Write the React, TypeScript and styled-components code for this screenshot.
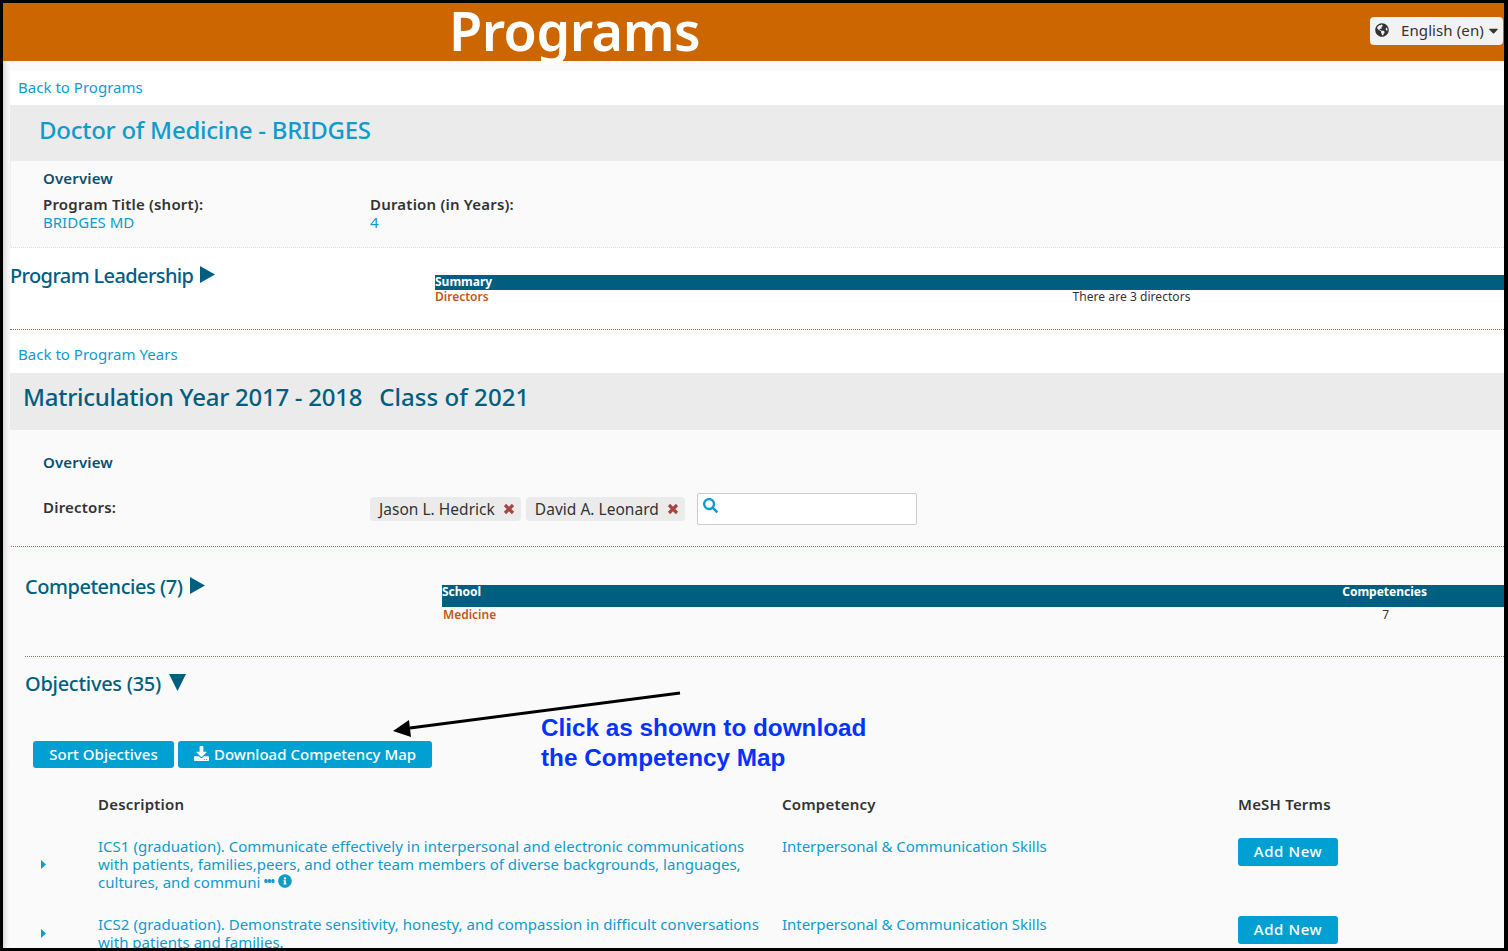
import React from "react";
import styled, { createGlobalStyle } from "styled-components";
import { FaGlobeAmericas, FaSearch, FaDownload, FaInfoCircle, FaCaretDown } from "react-icons/fa";

const Global = createGlobalStyle`
  html, body { margin: 0; padding: 0; background: #000; }
  * { box-sizing: border-box; }
  body { font-family: "Noto Sans", "Open Sans", sans-serif; }
`;

const teal = "#005f80";
const link = "#0f9bcc";
const orange = "#cc6600";

const Frame = styled.div`
  position: relative;
  width: 1508px;
  height: 951px;
  border: 3px solid #000;
  border-right-width: 4px;
  overflow: hidden;
  background: #fff;
  font-size: 15px;
  letter-spacing: 0.02px;
  color: #333;
`;
const Header = styled.header`
  height: 58px;
  background: ${orange};
  display: flex;
  align-items: flex-start;
  justify-content: space-between;
  padding: 0 1px 0 446px;
`;
const PageTitle = styled.h1`
  margin: 0;
  font-size: 54px;
  line-height: 54px;
  font-weight: 600;
  color: #fff;
  letter-spacing: -0.5px;
`;
const LangButton = styled.div`
  margin-top: 14px;
  width: 133px;
  height: 28px;
  background: #f2f2f2;
  border-radius: 4px;
  display: flex;
  align-items: center;
  padding: 0 2px 2px 5px;
  color: #333;
  font-size: 15px;
  letter-spacing: 0.1px;
  svg { flex-shrink: 0; }
`;
const LangText = styled.span`
  margin: 0 2px 0 12px;
  white-space: nowrap;
`;
const Main = styled.div`
  padding-left: 7px;
  background: linear-gradient(to right, #d8d8d8 0, #efefef 3px, #fafafa 7px);
`;
const Strip = styled.div`
  height: 10px;
  background: #fafafa;
`;
const BackRow = styled.div<{ $h: number; $top: number }>`
  height: ${(p) => p.$h}px;
  background: #fff;
  padding: ${(p) => p.$top}px 0 0 8px;
  line-height: 20px;
`;
const A = styled.span`
  color: ${link};
`;
const CompetencyLink = styled(A)`
  letter-spacing: -0.04px;
`;
const TitleBar = styled.div<{ $h: number; $x: number; $c: string; $pb: number }>`
  height: ${(p) => p.$h}px;
  background: #ebebeb;
  padding-left: ${(p) => p.$x}px;
  padding-bottom: ${(p) => p.$pb}px;
  color: ${(p) => p.$c};
  font-size: 24px;
  font-weight: 500;
  letter-spacing: -0.26px;
  display: flex;
  align-items: center;
  gap: 17px;
`;
const ClassLabel = styled.span`
  letter-spacing: 0.05px;
`;
const Overview = styled.section`
  height: 87px;
  background: #fafafa;
  border-left: 1px dotted #e6e6e6;
  border-bottom: 1px dotted #ddd;
  padding: 7px 0 0 32px;
`;
const SubHead = styled.div`
  color: #0d4f6b;
  font-weight: 600;
  font-size: 15px;
  line-height: 20px;
  letter-spacing: 0.15px;
`;
const Fields = styled.div`
  display: flex;
  margin-top: 7px;
  line-height: 18px;
`;
const Field = styled.div`
  width: 327px;
`;
const Label = styled.div`
  font-weight: 600;
  color: #333;
  letter-spacing: 0.2px;
`;
const Leadership = styled.section`
  height: 82px;
  background: #fff;
  border-bottom: 1px dotted #a8632a;
  display: flex;
  padding-top: 14px;
`;
const SectionTitle = styled.div<{ $ls: number }>`
  color: ${teal};
  font-size: 20px;
  font-weight: 500;
  line-height: 26px;
  letter-spacing: ${(p) => p.$ls}px;
  display: flex;
  align-items: flex-start;
  gap: 7px;
  margin-top: 1px;
  svg { margin-top: 3px; }
`;
const LeadTitle = styled(SectionTitle)`
  width: 425px;
`;
const MiniTable = styled.div`
  flex: 1;
  font-size: 12px;
  line-height: 14px;
  letter-spacing: 0;
`;
const SummaryHead = styled.div`
  margin-top: 13px;
  height: 15px;
  background: ${teal};
  color: #fff;
  font-weight: 700;
`;
const SummaryRow = styled.div`
  display: flex;
  color: #333;
`;
const Orange = styled.span`
  color: #c4561c;
  font-weight: 600;
`;
const RowNote = styled.span`
  margin-left: 584px;
  letter-spacing: 0.05px;
`;
const YearBody = styled.section`
  background: #fafafa;
`;
const YearOverview = styled.div`
  height: 117px;
  border-bottom: 1px dotted ${orange};
  margin-left: 1px;
  padding: 22px 0 0 32px;
`;
const DirRow = styled.div`
  display: flex;
  align-items: flex-start;
  margin-top: 20px;
`;
const DirLabel = styled(Label)`
  width: 327px;
  line-height: 32px;
  margin-top: -1px;
`;
const Chip = styled.span`
  height: 24px;
  margin: 5px 5px 0 0;
  background: #ebebeb;
  border-radius: 4px;
  padding: 0 6px 0 9px;
  display: inline-flex;
  align-items: center;
  gap: 8px;
  font-size: 15.5px;
`;
const SearchBox = styled.div`
  width: 220px;
  height: 32px;
  margin: 1px 0 0 7px;
  background: #fff;
  border: 1px solid #ccc;
  border-radius: 2px;
  padding: 4px 0 0 5px;
  color: ${link};
  line-height: 0;
`;
const CompSection = styled.div`
  height: 110px;
  margin-left: 15px;
  border-bottom: 1px dotted ${orange};
  display: flex;
  padding-top: 25px;
`;
const CompTitle = styled(SectionTitle)`
  width: 417px;
  gap: 8px;
  margin-top: 2px;
`;
const CompHead = styled.div`
  margin-top: 13px;
  height: 22px;
  background: ${teal};
  color: #fff;
  font-weight: 700;
  display: flex;
  justify-content: space-between;
  padding-right: 77px;
`;
const CompRow = styled.div`
  display: flex;
  justify-content: space-between;
  padding: 1px 115px 0 1px;
`;
const Objectives = styled.div`
  padding: 13px 0 0 15px;
`;
const ObjTitle = styled(SectionTitle)`
  gap: 8px;
`;
const Buttons = styled.div`
  display: flex;
  gap: 4px;
  margin: 44px 0 0 8px;
`;
const Btn = styled.div<{ $w: number }>`
  width: ${(p) => p.$w}px;
  height: 27px;
  background: #00a0d2;
  color: #fff;
  border-radius: 3px;
  display: flex;
  align-items: center;
  justify-content: center;
  gap: 5px;
  font-size: 15px;
  font-weight: 500;
  padding-bottom: 2px;
`;
const ObjGrid = styled.div`
  display: grid;
  grid-template-columns: 73px 684px 456px 1fr;
  line-height: 18px;
`;
const HeadCell = styled(Label)`
  padding-top: 27px;
  height: 69px;
`;
const RowArrow = styled.div<{ $lines: number }>`
  height: ${(p) => p.$lines * 18}px;
  padding-left: 16px;
  display: flex;
  align-items: center;
`;
const DescCell = styled.div`
  color: ${link};
  height: 78px;
  padding-right: 12px;
`;
const AddBtn = styled(Btn)`
  height: 28px;
  margin-top: 1px;
  letter-spacing: 0.6px;
`;
const Dots = styled.span`
  font-weight: 700;
  letter-spacing: -1px;
  margin: 0 4px 0 3px;
  font-size: 12px;
  position: relative;
  top: -2px;
`;
const Note = styled.div`
  position: absolute;
  left: 538px;
  top: 710px;
  font-family: "Liberation Sans", Arial, sans-serif;
  font-weight: 700;
  font-size: 24.3px;
  line-height: 30px;
  letter-spacing: 0;
  color: #0433ff;
`;
const ArrowSvg = styled.svg`
  position: absolute;
  left: 385px;
  top: 685px;
`;

const RightTriangle = () => (
  <svg width="15" height="17" viewBox="0 0 15 17"><path d="M0 0 15 8.5 0 17Z" fill={teal} /></svg>
);
const SmallCaret = () => (
  <svg width="5" height="9" viewBox="0 0 5 9"><path d="M0 0 5 4.5 0 9Z" fill={link} /></svg>
);
const RemoveIcon = () => (
  <svg width="12" height="12" viewBox="0 0 12 12"><path d="M2 2 10 10M10 2 2 10" stroke="#a94442" strokeWidth="3.2" /></svg>
);

export default function App() {
  return (
    <Frame>
      <Global />
      <Header>
        <PageTitle>Programs</PageTitle>
        <LangButton>
          <FaGlobeAmericas size={14} />
          <LangText>English (en)</LangText>
          <FaCaretDown size={15} />
        </LangButton>
      </Header>
      <Main>
        <Strip />
        <BackRow $h={34} $top={6}>
          <A>Back to Programs</A>
        </BackRow>
        <TitleBar $h={56} $x={29} $c={link} $pb={7}>Doctor of Medicine - BRIDGES</TitleBar>
        <Overview>
          <SubHead>Overview</SubHead>
          <Fields>
            <Field>
              <Label>Program Title (short):</Label>
              <A>BRIDGES MD</A>
            </Field>
            <Field>
              <Label>Duration (in Years):</Label>
              <A>4</A>
            </Field>
          </Fields>
        </Overview>
        <Leadership>
          <LeadTitle $ls={-0.62}>
            Program Leadership
            <RightTriangle />
          </LeadTitle>
          <MiniTable>
            <SummaryHead>Summary</SummaryHead>
            <SummaryRow>
              <Orange>Directors</Orange>
              <RowNote>There are 3 directors</RowNote>
            </SummaryRow>
          </MiniTable>
        </Leadership>
        <BackRow $h={43} $top={14}>
          <A>Back to Program Years</A>
        </BackRow>
        <TitleBar $h={57} $x={13} $c={teal} $pb={10}>
          <span>Matriculation Year 2017 - 2018</span>
          <ClassLabel>Class of 2021</ClassLabel>
        </TitleBar>
        <YearBody>
          <YearOverview>
            <SubHead>Overview</SubHead>
            <DirRow>
              <DirLabel>Directors:</DirLabel>
              <Chip>Jason L. Hedrick <RemoveIcon /></Chip>
              <Chip>David A. Leonard <RemoveIcon /></Chip>
              <SearchBox><FaSearch size={15} /></SearchBox>
            </DirRow>
          </YearOverview>
          <CompSection>
            <CompTitle $ls={-0.47}>
              Competencies (7)
              <RightTriangle />
            </CompTitle>
            <MiniTable>
              <CompHead><span>School</span><span>Competencies</span></CompHead>
              <CompRow><Orange>Medicine</Orange><span>7</span></CompRow>
            </MiniTable>
          </CompSection>
          <Objectives>
            <ObjTitle $ls={-0.28}>
              Objectives (35)
              <svg width="17" height="17" viewBox="0 0 17 17"><path d="M0 0H17L8.5 17Z" fill={teal} /></svg>
            </ObjTitle>
            <Buttons>
              <Btn $w={141}>Sort Objectives</Btn>
              <Btn $w={254}><FaDownload size={15} />Download Competency Map</Btn>
            </Buttons>
            <ObjGrid>
              <div />
              <HeadCell>Description</HeadCell>
              <HeadCell>Competency</HeadCell>
              <HeadCell>MeSH Terms</HeadCell>

              <RowArrow $lines={3}><SmallCaret /></RowArrow>
              <DescCell>
                ICS1 (graduation). Communicate effectively in interpersonal and electronic communications with patients, families,peers, and other team members of diverse backgrounds, languages, cultures, and communi
                <Dots>•••</Dots><FaInfoCircle size={14} />
              </DescCell>
              <CompetencyLink>Interpersonal &amp; Communication Skills</CompetencyLink>
              <AddBtn $w={100}>Add New</AddBtn>

              <RowArrow $lines={2}><SmallCaret /></RowArrow>
              <DescCell>
                ICS2 (graduation). Demonstrate sensitivity, honesty, and compassion in difficult conversations with patients and families.
              </DescCell>
              <CompetencyLink>Interpersonal &amp; Communication Skills</CompetencyLink>
              <AddBtn $w={100}>Add New</AddBtn>
            </ObjGrid>
          </Objectives>
        </YearBody>
      </Main>
      <ArrowSvg width="300" height="50" viewBox="0 0 300 50">
        <line x1="292" y1="5" x2="22" y2="40" stroke="#000" strokeWidth="3" />
        <path d="M5 43 21 32 23 49Z" fill="#000" />
      </ArrowSvg>
      <Note>Click as shown to download<br />the Competency Map</Note>
    </Frame>
  );
}
